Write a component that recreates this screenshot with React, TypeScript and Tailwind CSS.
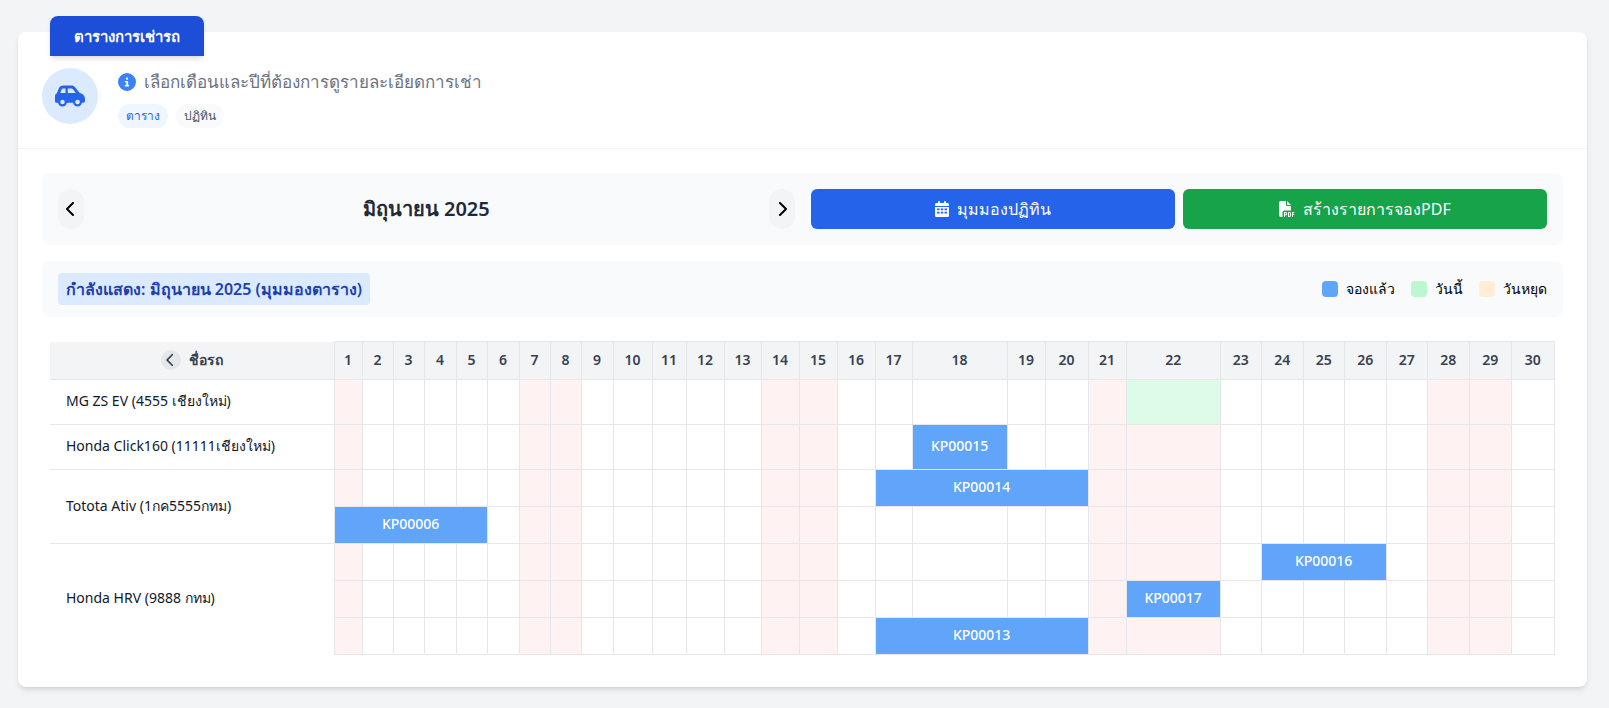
import { Fragment } from "react";
import { FaCarSide, FaChevronLeft, FaChevronRight, FaCircleInfo, FaFilePdf } from "react-icons/fa6";

type Booking = { start: number; end: number; code: string };
type Car = { name: string; tall?: boolean; today?: boolean; rows: Booking[][] };

const DAY_WIDTHS = [
  28, 31, 31, 32, 31, 32, 31, 31, 32, 39, 34, 38, 37, 38, 38, 38, 37, 95, 38, 43, 38, 94, 41, 42, 41, 42, 41, 42, 42, 43,
];
const DAYS = DAY_WIDTHS.map((_, i) => i + 1);
const WEEKEND = [1, 7, 8, 14, 15, 21, 22, 28, 29];
const TODAY = 22;

const CARS: Car[] = [
  { name: "MG ZS EV (4555 เชียงใหม่)", tall: true, today: true, rows: [[]] },
  { name: "Honda Click160 (11111เชียงใหม่)", tall: true, rows: [[{ start: 18, end: 18, code: "KP00015" }]] },
  {
    name: "Totota Ativ (1กค5555กทม)",
    rows: [[{ start: 17, end: 20, code: "KP00014" }], [{ start: 1, end: 5, code: "KP00006" }]],
  },
  {
    name: "Honda HRV (9888 กทม)",
    rows: [
      [{ start: 24, end: 26, code: "KP00016" }],
      [{ start: 22, end: 22, code: "KP00017" }],
      [{ start: 17, end: 20, code: "KP00013" }],
    ],
  },
];

const LEGEND = [
  { label: "จองแล้ว", color: "bg-[#60a5fa]" },
  { label: "วันนี้", color: "bg-[#bbf7d0]" },
  { label: "วันหยุด", color: "bg-[#ffedd5]" },
];

function CalendarIcon() {
  return (
    <svg viewBox="0 0 448 512" className="h-4 w-[14px]" fill="currentColor" aria-hidden="true">
      <path
        fillRule="evenodd"
        d="M96 32a32 32 0 0 1 64 0v32h128V32a32 32 0 0 1 64 0v32h48a48 48 0 0 1 48 48v48H0v-48a48 48 0 0 1 48-48h48zM0 192h448v272a48 48 0 0 1-48 48H48a48 48 0 0 1-48-48zM64 240v56h80v-56zM184 240v56h80v-56zM304 240v56h80v-56zM64 344v56h80v-56zM184 344v56h80v-56zM304 344v56h80v-56z"
      />
    </svg>
  );
}

function dayCells(bookings: Booking[], isToday: boolean) {
  const cells = [];
  for (let day = 1; day <= DAYS.length; day++) {
    const booking = bookings.find((b) => b.start === day);
    if (booking) {
      cells.push(
        <td
          key={day}
          colSpan={booking.end - booking.start + 1}
          className="border border-[#e5e7eb] bg-[#60a5fa] pb-[2px] text-center font-medium text-white"
        >
          {booking.code}
        </td>,
      );
      day = booking.end;
      continue;
    }
    const color = isToday && day === TODAY ? "bg-[#dcfce7]" : WEEKEND.includes(day) ? "bg-[#fef2f2]" : "bg-white";
    cells.push(<td key={day} className={`border border-[#e5e7eb] ${color}`} />);
  }
  return cells;
}

export default function App() {
  return (
    <div className="min-h-screen bg-[#f3f4f6] pt-8 pr-[22px] pb-5 pl-[18px] font-['Noto_Sans',sans-serif] text-[#111827]">
      <main className="relative rounded-lg bg-white shadow-md">
        <h1 className="absolute -top-4 left-8 rounded-t-lg bg-[#1d4ed8] px-6 py-2 text-[15px] leading-6 font-bold text-white shadow-md">
          ตารางการเช่ารถ
        </h1>

        <header className="flex items-start gap-5 border-b border-[#f3f4f6] px-6 pt-9 pb-5">
          <div className="flex size-14 items-center justify-center rounded-full bg-[#dbeafe] text-[#2563eb]">
            <FaCarSide className="size-[30px]" />
          </div>
          <div>
            <p className="flex h-7 items-center gap-2 text-[17px] text-[#6b7280]">
              <FaCircleInfo className="size-[18px] text-[#3b82f6]" />
              เลือกเดือนและปีที่ต้องการดูรายละเอียดการเช่า
            </p>
            <div className="mt-2 flex gap-2 text-xs leading-4">
              <span className="rounded-full bg-[#eff6ff] px-2 py-1 text-[#2563eb]">ตาราง</span>
              <span className="rounded-full bg-[#f9fafb] px-2 py-1 text-[#4b5563]">ปฏิทิน</span>
            </div>
          </div>
        </header>

        <div className="px-6 pt-6 pb-8">
          <section className="grid grid-cols-2 gap-4 rounded-lg bg-[#f9fafb] p-4">
            <div className="flex items-center justify-between">
              <button aria-label="เดือนก่อนหน้า" className="h-10 rounded-full bg-[#f3f4f6] px-2 text-black">
                <FaChevronLeft className="h-4 w-[10px]" />
              </button>
              <h2 className="text-xl font-semibold text-[#1f2937]">มิถุนายน 2025</h2>
              <button aria-label="เดือนถัดไป" className="h-10 rounded-full bg-[#f3f4f6] px-2 text-black">
                <FaChevronRight className="h-4 w-[10px]" />
              </button>
            </div>
            <div className="grid grid-cols-2 gap-2 text-base text-white">
              <button className="flex h-10 items-center justify-center gap-2 rounded-md bg-[#2563eb]">
                <CalendarIcon />
                มุมมองปฏิทิน
              </button>
              <button className="flex h-10 items-center justify-center gap-2 rounded-md bg-[#16a34a]">
                <FaFilePdf className="size-4" />
                สร้างรายการจองPDF
              </button>
            </div>
          </section>

          <section className="mt-4 flex items-center justify-between rounded-lg bg-[#f9fafb] px-4 py-3">
            <p className="rounded bg-[#dbeafe] px-2 py-1 text-base leading-6 font-semibold text-[#1e40af]">
              กำลังแสดง: มิถุนายน 2025 (มุมมองตาราง)
            </p>
            <ul className="flex gap-4 text-sm text-black">
              {LEGEND.map((item) => (
                <li key={item.label} className="flex items-center gap-2">
                  <span className={`size-4 rounded ${item.color}`} />
                  {item.label}
                </li>
              ))}
            </ul>
          </section>

          <div className="mt-6 px-2">
            <table className="w-full table-fixed border-collapse text-sm">
              <colgroup>
                <col className="w-[284px]" />
                {DAY_WIDTHS.map((width, i) => (
                  <col key={i} style={{ width }} />
                ))}
              </colgroup>
              <thead>
                <tr className="h-[38px] bg-[#f3f4f6] text-[#374151]">
                  <th scope="col" className="border-r border-b border-[#e5e7eb] font-semibold">
                    <div className="flex items-center justify-center gap-2">
                      <button
                        aria-label="ย่อคอลัมน์"
                        className="flex size-5 items-center justify-center rounded-full bg-[#e5e7eb]"
                      >
                        <FaChevronLeft className="h-[14px] w-[9px]" />
                      </button>
                      ชื่อรถ
                    </div>
                  </th>
                  {DAYS.map((day) => (
                    <th key={day} scope="col" className="border border-[#e5e7eb] pb-[2px] font-semibold">
                      {day}
                    </th>
                  ))}
                </tr>
              </thead>
              <tbody>
                {CARS.map((car, carIndex) => (
                  <Fragment key={car.name}>
                    {car.rows.map((bookings, rowIndex) => (
                      <tr key={rowIndex} className={car.tall ? "h-[45px]" : "h-[37px]"}>
                        {rowIndex === 0 && (
                          <th
                            scope="rowgroup"
                            rowSpan={car.rows.length}
                            className={
                              carIndex < CARS.length - 1
                                ? "border-r border-b border-[#e5e7eb] px-4 pb-[2px] text-left font-normal"
                                : "border-r border-[#e5e7eb] px-4 pb-[2px] text-left font-normal"
                            }
                          >
                            {car.name}
                          </th>
                        )}
                        {dayCells(bookings, Boolean(car.today))}
                      </tr>
                    ))}
                  </Fragment>
                ))}
              </tbody>
            </table>
          </div>
        </div>
      </main>
    </div>
  );
}
